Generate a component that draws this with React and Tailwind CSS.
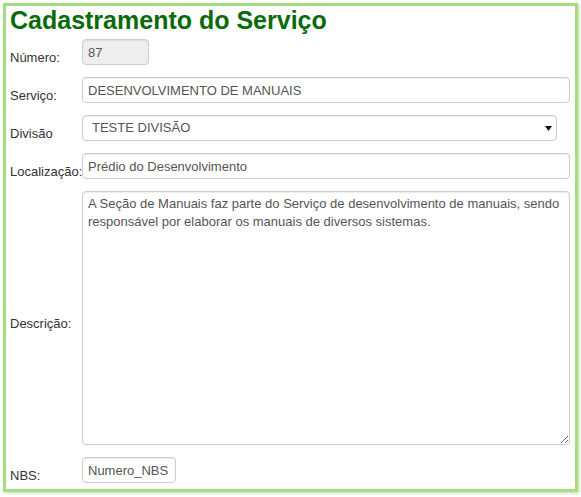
import { useState } from "react";

function Row({ label, children, className = "" }) {
  return (
    <div className={"flex items-center " + className}>
      <label className="w-[72px] shrink-0 translate-y-[5px] text-[13px] leading-[15px] text-[#333] whitespace-nowrap">
        {label}
      </label>
      {children}
    </div>
  );
}

const inputCls =
  "h-[26px] border border-[#ccc] rounded-[4px] px-[5px] text-[13px] text-[#555] shadow-[inset_0_1px_1px_rgba(0,0,0,0.075)] outline-none";

function App() {
  const [servico, setServico] = useState("DESENVOLVIMENTO DE MANUAIS");
  const [divisao, setDivisao] = useState("1");
  const [local, setLocal] = useState("Prédio do Desenvolvimento");
  const [descricao, setDescricao] = useState(
    "A Seção de Manuais faz parte do Serviço de desenvolvimento de manuais, sendo responsável por elaborar os manuais de diversos sistemas."
  );
  const [nbs, setNbs] = useState("Numero_NBS");

  return (
    <div
      className="bg-white p-[3px] w-[581px]"
      style={{ fontFamily: '"Liberation Sans", Arial, sans-serif' }}
    >
      <div className="border-[3px] border-[#a9dc82] shadow-[1px_1px_3px_rgba(140,200,100,0.6)] pt-[2px] pb-[6px] pl-[4px] pr-[5px] flex flex-col">
        <h1 className="text-[25px] leading-[25px] font-bold text-[#0a6b0a]">
          Cadastramento do Serviço
        </h1>

        <div className="flex flex-col gap-3 mt-[6px]">
          <Row label="Número:">
            <input
              className={inputCls + " w-[67px] bg-[#eee]"}
              value="87"
              disabled
              readOnly
            />
          </Row>

          <Row label="Serviço:">
            <input
              className={inputCls + " flex-1 bg-white"}
              value={servico}
              onChange={(e) => setServico(e.target.value)}
            />
          </Row>

          <Row label="Divisão" className="pr-[13px]">
            <div className="relative flex-1">
              <select
                className={inputCls + " w-full appearance-none bg-white pl-[9px]"}
                value={divisao}
                onChange={(e) => setDivisao(e.target.value)}
              >
                <option value="1">TESTE DIVISÃO</option>
              </select>
              <svg
                className="absolute right-[5px] top-[11px] pointer-events-none"
                width="7"
                height="5"
                viewBox="0 0 7 5"
              >
                <path d="M0 0H7L3.5 5Z" fill="#111" />
              </svg>
            </div>
          </Row>

          <Row label="Localização:">
            <input
              className={inputCls + " flex-1 bg-white"}
              value={local}
              onChange={(e) => setLocal(e.target.value)}
            />
          </Row>

          <Row label="Descrição:">
            <textarea
              className="flex-1 h-[254px] bg-white border border-[#ccc] rounded-[4px] px-[5px] py-[3px] text-[13px] leading-[18px] text-[#555] shadow-[inset_0_1px_1px_rgba(0,0,0,0.075)] outline-none"
              value={descricao}
              onChange={(e) => setDescricao(e.target.value)}
            />
          </Row>

          <Row label="NBS:">
            <input
              className={inputCls + " w-[94px] bg-white"}
              value={nbs}
              onChange={(e) => setNbs(e.target.value)}
            />
          </Row>
        </div>
      </div>
    </div>
  );
}

export default App;
